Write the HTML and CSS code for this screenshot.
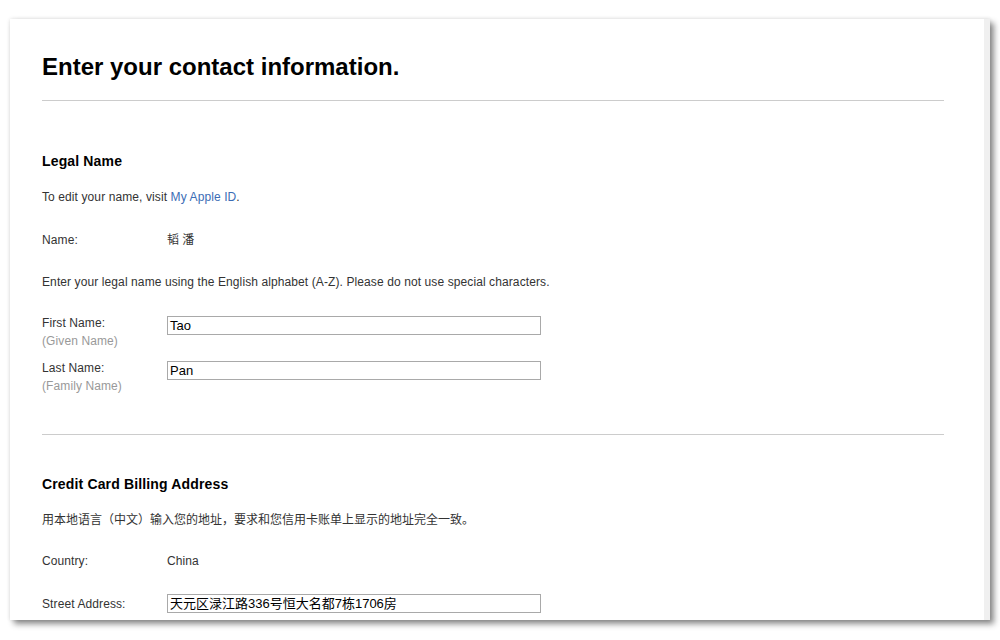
FILE: index.html
```html
<!DOCTYPE html>
<html>
<head>
<meta charset="utf-8">
<link rel="stylesheet" href="styles.css">
</head>
<body>
<div class="card">
  <div class="content">
    <h1 class="title">Enter your contact information.</h1>
    <div class="rule rule-top"></div>

    <h2 class="section">Legal Name</h2>
    <p class="note">To edit your name, visit <a class="link" href="#">My Apple ID</a>.</p>
    <div class="row row-static">
      <div class="label">Name:</div>
      <div class="value cjk">韬 潘</div>
    </div>
    <p class="note note-gap">Enter your legal name using the English alphabet (A-Z). Please do not use special characters.</p>

    <div class="row row-field first">
      <div class="label-col">
        <div class="label">First Name:</div>
        <div class="sub">(Given Name)</div>
      </div>
      <div class="field">Tao</div>
    </div>
    <div class="row row-field second">
      <div class="label-col">
        <div class="label">Last Name:</div>
        <div class="sub">(Family Name)</div>
      </div>
      <div class="field">Pan</div>
    </div>

    <div class="rule rule-mid"></div>

    <h2 class="section section-2">Credit Card Billing Address</h2>
    <p class="note cjk">用本地语言（中文）输入您的地址，要求和您信用卡账单上显示的地址完全一致。</p>
    <div class="row row-static country">
      <div class="label">Country:</div>
      <div class="value">China</div>
    </div>
    <div class="row row-street">
      <div class="label">Street Address:</div>
      <div class="field cjk">天元区渌江路336号恒大名都7栋1706房</div>
    </div>
  </div>
  <div class="track"></div>
</div>
</body>
</html>
```

FILE: styles.css
```css
html, body {
  margin: 0;
  padding: 0;
  background: #ffffff;
}
body {
  font-family: "Liberation Sans", Arial, "Noto Sans CJK SC", sans-serif;
  color: #333333;
  width: 1000px;
  height: 640px;
  overflow: hidden;
}
.cjk {
  font-family: "Liberation Sans", Arial, "Noto Sans CJK SC", sans-serif;
  letter-spacing: 0;
}
.card {
  margin: 19px 0 0 10px;
  width: 980px;
  height: 601px;
  background: #ffffff;
  display: flex;
  box-shadow: 4px 4px 6px rgba(0, 0, 0, 0.45), 0 0 4px rgba(0, 0, 0, 0.12);
  overflow: hidden;
}
.content {
  flex: 1;
  padding: 34px 40px 0 32px;
}
.track {
  width: 6px;
  background: #f0f0f0;
}
.title {
  margin: 0;
  font-size: 24px;
  line-height: 28px;
  font-weight: bold;
  color: #000000;
}
.rule {
  height: 1px;
  background: #cccccc;
}
.rule-top {
  margin-top: 19px;
}
.rule-mid {
  margin-top: 39px;
}
.section {
  margin: 51px 0 0 0;
  font-size: 14px;
  line-height: 18px;
  font-weight: bold;
  color: #000000;
  letter-spacing: 0.15px;
}
.section-2 {
  margin-top: 40px;
}
.note {
  margin: 19px 0 0 0;
  font-size: 12px;
  line-height: 16px;
  color: #333333;
  letter-spacing: 0.1px;
}
.note.cjk {
  letter-spacing: 0;
}
.note-gap {
  margin-top: 26px;
}
.link {
  color: #3b6db5;
  text-decoration: none;
}
.row {
  display: flex;
  font-size: 12px;
  letter-spacing: 0.1px;
}
.label, .label-col {
  width: 125px;
  flex: none;
}
.label {
  color: #333333;
}
.row-static {
  margin-top: 27px;
  line-height: 16px;
}
.country {
  margin-top: 25px;
}
.value {
  color: #333333;
}
.row-field {
  line-height: 18px;
}
.row-field.first {
  margin-top: 24px;
}
.row-field.second {
  margin-top: 9px;
}
.sub {
  color: #999999;
}
.field {
  box-sizing: border-box;
  width: 374px;
  height: 19px;
  margin-top: 2px;
  border: 1px solid #a9a9a9;
  padding: 0 2px;
  font-size: 13px;
  line-height: 17px;
  color: #000000;
  white-space: nowrap;
  letter-spacing: 0;
}
.row-street {
  margin-top: 25px;
  align-items: center;
  line-height: 16px;
}
.row-street .field {
  margin-top: 0;
}
```
